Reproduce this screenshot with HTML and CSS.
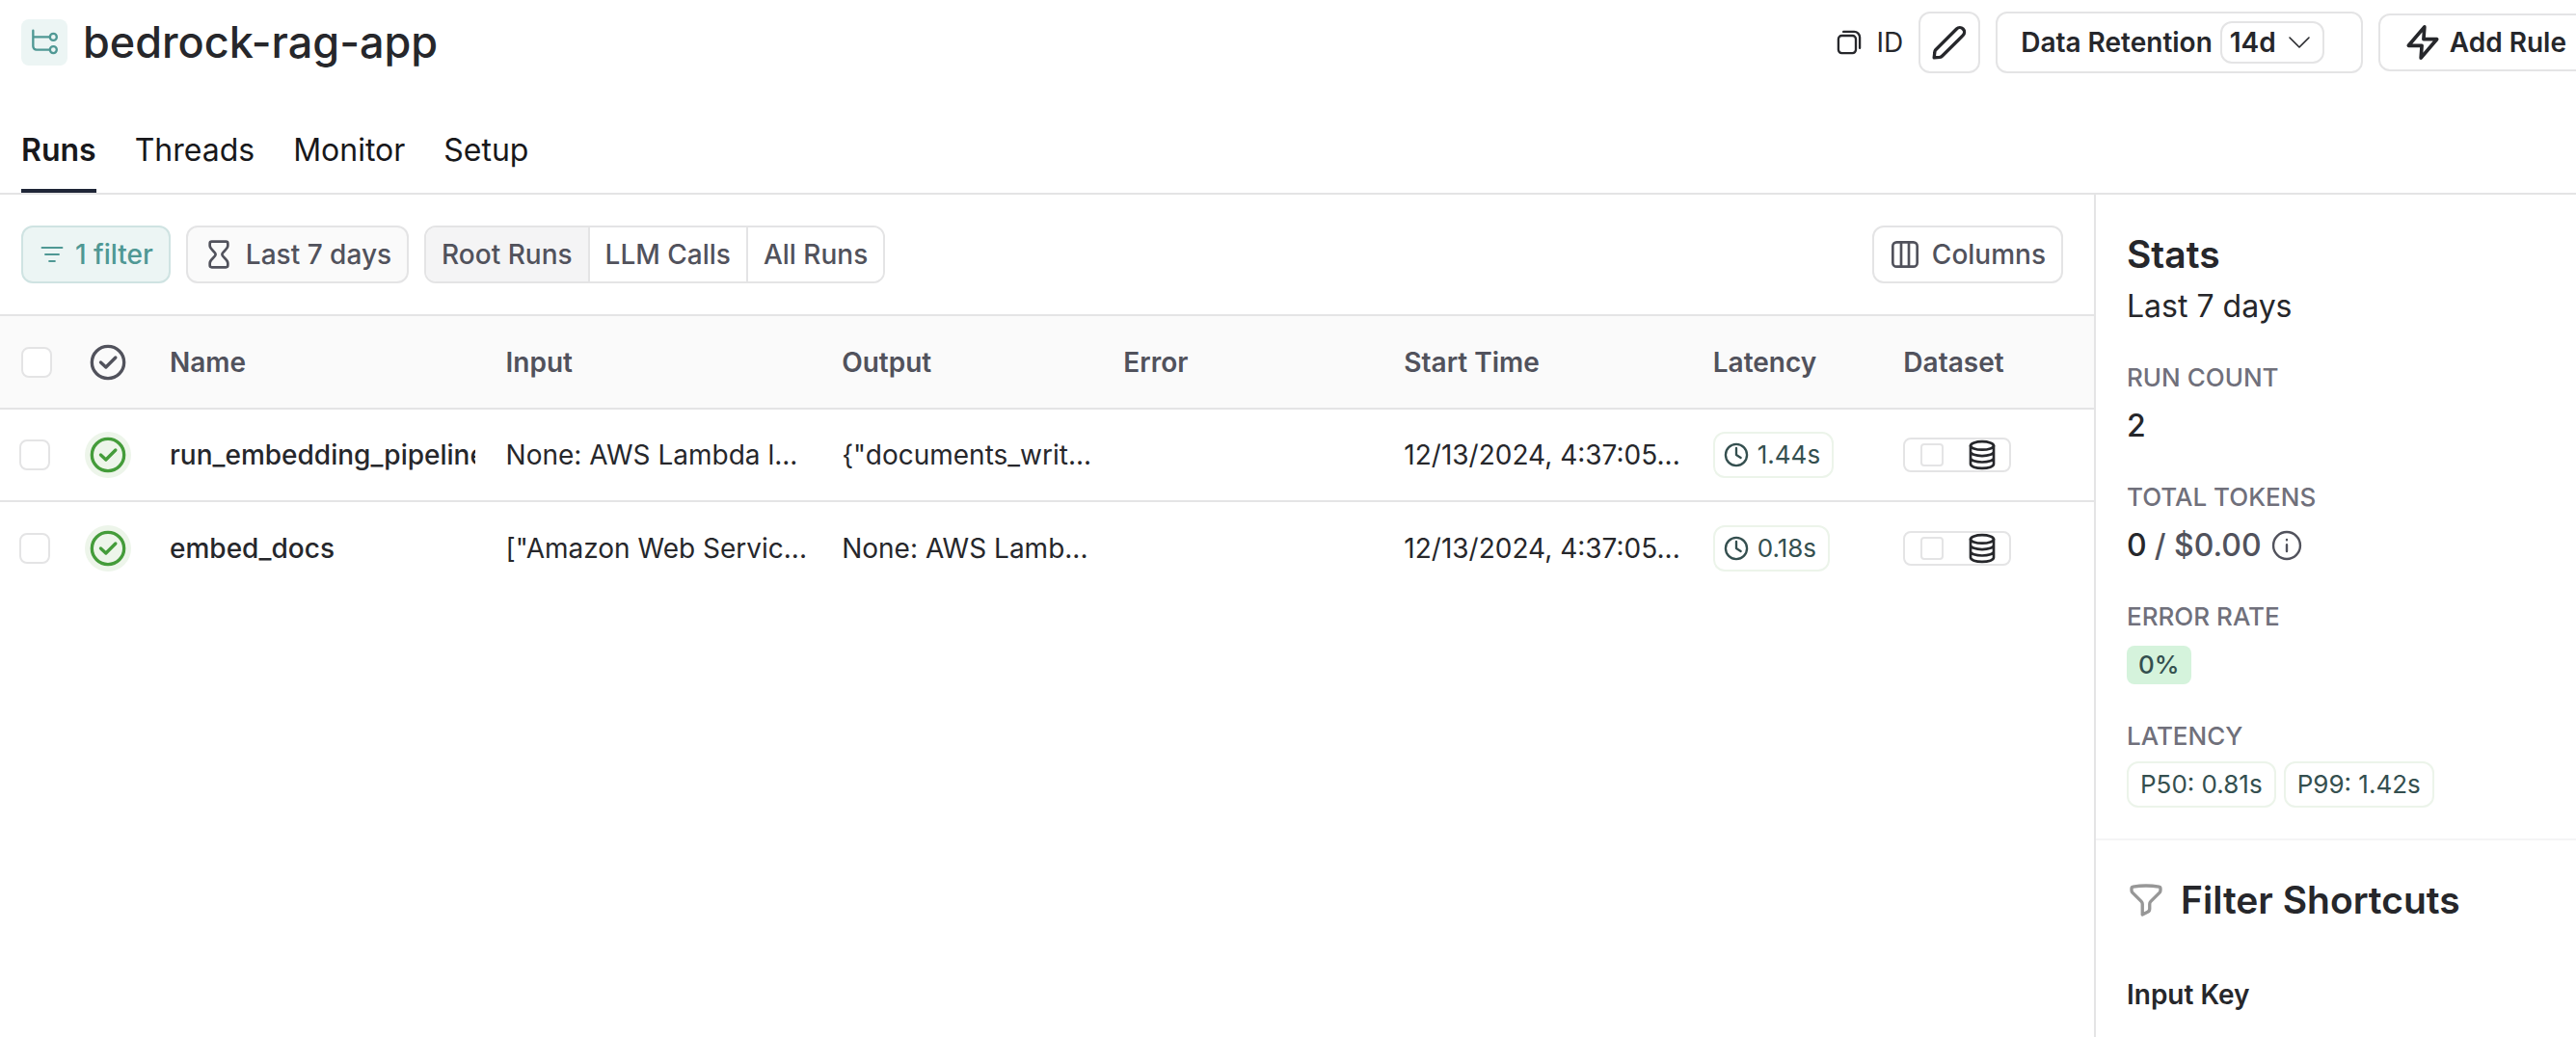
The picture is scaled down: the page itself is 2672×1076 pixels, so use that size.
FILE: index.html
```html
<!DOCTYPE html>
<html lang="en">
<head>
<meta charset="utf-8">
<title>bedrock-rag-app</title>
<link rel="stylesheet" href="styles.css">
</head>
<body>
<svg class="sprite" aria-hidden="true">
  <symbol id="check-circle" viewBox="0 0 24 24"><circle cx="12" cy="12" r="10"/><path d="M7.500 12l3.200 3 6-6"/></symbol>
  <symbol id="clock" viewBox="0 0 24 24"><circle cx="12" cy="12" r="9.500"/><path d="M12 6v6l4 2.500"/></symbol>
  <symbol id="database" viewBox="0 0 24 24"><ellipse cx="12" cy="4.800" rx="9" ry="3.200"/><path d="M3 4.800v14.400c0 1.800 4 3.200 9 3.200s9-1.400 9-3.200V4.800M3 9.600c0 1.800 4 3.200 9 3.200s9-1.400 9-3.200M3 14.400c0 1.800 4 3.200 9 3.200s9-1.400 9-3.200"/></symbol>
</svg>

<header class="topbar">
  <span class="project-icon"><svg class="icon icon-28" viewBox="0 0 24 24"><path d="M2 1.500v14a3 3 0 0 0 3 3h12M2 7.200h15"/><circle cx="20" cy="7.200" r="3"/><circle cx="20" cy="18.500" r="3"/></svg></span>
  <h1 class="title">bedrock-rag-app</h1>
  <div class="actions">
    <button class="copy-id"><svg class="icon icon-28" viewBox="0 0 24 24"><path d="M7 2.500h9.500a5 5 0 0 1 5 5V17"/><rect x="2.500" y="6" width="15.500" height="15.500" rx="3"/></svg>ID</button>
    <button class="btn btn-edit" aria-label="Edit"><svg class="icon icon-40" viewBox="0 0 24 24"><path d="M2.900 18.100c0-.500.100-.700.200-.900.100-.200.200-.400.500-.700L16.500 3.600a2.800 2.800 0 0 1 4 4L7.600 20.400c-.300.300-.500.500-.700.600-.200.100-.400.100-.900.200l-3.500.300z"/></svg></button>
    <button class="btn btn-retention">Data Retention <span class="pill">14d <svg class="icon icon-24 thin" viewBox="0 0 24 24"><path d="M2 7l10 10L22 7"/></svg></span></button>
    <button class="btn btn-rule"><svg class="icon icon-44" viewBox="0 0 24 24"><path d="M13 3.200L4 13.800h7.500L11 20.800L20 10.200h-7.500z"/></svg>Add Rule</button>
  </div>
</header>

<nav class="tabs">
  <a class="tab active" href="#runs">Runs</a>
  <a class="tab" href="#threads">Threads</a>
  <a class="tab" href="#monitor">Monitor</a>
  <a class="tab" href="#setup">Setup</a>
</nav>

<div class="body">
  <main class="main">
    <div class="toolbar">
      <button class="chip chip-filter"><svg class="icon icon-28 thin" viewBox="0 0 24 24"><path d="M3 6h18M6 12h12M9.500 18h5"/></svg>1 filter</button>
      <button class="chip chip-time"><svg class="icon icon-32" viewBox="0 0 24 24"><path d="M6.500 2h11c.800 0 1.500.600 1.500 1.500v1.800c0 2.700-4.500 4.700-4.500 6.700s4.500 4 4.500 6.700v1.800c0 .900-.700 1.500-1.500 1.500h-11c-.800 0-1.500-.600-1.500-1.500v-1.800C5 16 9.500 14 9.500 12S5 8 5 5.300V3.500C5 2.600 5.700 2 6.500 2z"/></svg>Last 7 days</button>
      <div class="segmented">
        <button class="segment selected">Root Runs</button>
        <button class="segment">LLM Calls</button>
        <button class="segment">All Runs</button>
      </div>
      <button class="chip chip-columns"><svg class="icon icon-32" viewBox="0 0 24 24"><rect x="2.500" y="2.500" width="19" height="19" rx="3"/><path d="M9 2.500v19M15 2.500v19"/></svg>Columns</button>
    </div>

    <table class="runs">
      <colgroup><col class="c-check"><col class="c-status"><col class="c-name"><col class="c-input"><col class="c-output"><col class="c-error"><col class="c-start"><col class="c-latency"><col class="c-dataset"></colgroup>
      <thead>
        <tr>
          <th><input class="box" type="checkbox" aria-label="Select all runs"></th>
          <th><svg class="icon icon-40 status-head" role="img" aria-label="Status"><use href="#check-circle"/></svg></th>
          <th>Name</th><th>Input</th><th>Output</th><th>Error</th><th>Start Time</th><th>Latency</th><th>Dataset</th>
        </tr>
      </thead>
      <tbody>
        <tr>
          <td><input class="box" type="checkbox" aria-label="Select run_embedding_pipeline"></td>
          <td><span class="status"><svg class="icon icon-40"><use href="#check-circle"/></svg></span></td>
          <td><div class="name">run_embedding_pipeline</div></td>
          <td>None: AWS Lambda l...</td>
          <td>{"documents_writ...</td>
          <td></td>
          <td>12/13/2024, 4:37:05...</td>
          <td><span class="tag"><svg class="icon icon-28"><use href="#clock"/></svg>1.44s</span></td>
          <td><span class="dataset"><input class="box box-small" type="checkbox" aria-label="In dataset"><svg class="icon icon-32"><use href="#database"/></svg></span></td>
        </tr>
        <tr>
          <td><input class="box" type="checkbox" aria-label="Select embed_docs"></td>
          <td><span class="status"><svg class="icon icon-40"><use href="#check-circle"/></svg></span></td>
          <td><div class="name">embed_docs</div></td>
          <td>["Amazon Web Servic...</td>
          <td>None: AWS Lamb...</td>
          <td></td>
          <td>12/13/2024, 4:37:05...</td>
          <td><span class="tag"><svg class="icon icon-28"><use href="#clock"/></svg>0.18s</span></td>
          <td><span class="dataset"><input class="box box-small" type="checkbox" aria-label="In dataset"><svg class="icon icon-32"><use href="#database"/></svg></span></td>
        </tr>
      </tbody>
    </table>
  </main>

  <aside class="side">
    <section class="stats">
      <h2 class="side-title">Stats</h2>
      <p class="period">Last 7 days</p>
      <dl class="stat-list">
        <div class="stat"><dt>RUN COUNT</dt><dd>2</dd></div>
        <div class="stat"><dt>TOTAL TOKENS</dt><dd>0 <span class="cost">/ $0.00</span><svg class="icon icon-36 thin info" viewBox="0 0 24 24"><circle cx="12" cy="12" r="9.300"/><path d="M12 11.500V16M12 8v.2"/></svg></dd></div>
        <div class="stat"><dt>ERROR RATE</dt><dd><span class="rate">0%</span></dd></div>
        <div class="stat"><dt>LATENCY</dt><dd class="tags"><span class="tag tag-text">P50: 0.81s</span><span class="tag tag-text">P99: 1.42s</span></dd></div>
      </dl>
    </section>
    <section class="shortcuts">
      <h2 class="side-title"><svg class="icon icon-40 funnel" viewBox="0 0 24 24"><path d="M12 3c2.755 0 5.455.232 8.083.678.533.090.917.556.917 1.096v1.044a2.250 2.250 0 0 1-.659 1.591l-5.432 5.432a2.250 2.250 0 0 0-.659 1.591v2.927a2.250 2.250 0 0 1-1.244 2.013L9.750 21v-6.568a2.250 2.250 0 0 0-.659-1.591L3.659 7.409A2.250 2.250 0 0 1 3 5.818V4.774c0-.540.384-1.006.917-1.096A48.320 48.320 0 0 1 12 3z"/></svg>Filter Shortcuts</h2>
      <h3 class="key">Input Key</h3>
    </section>
  </aside>
</div>
</body>
</html>
```
FILE: styles.css
```css
* { box-sizing: border-box; }

body {
  margin: 0;
  display: flex;
  flex-direction: column;
  min-height: 100vh;
  overflow-x: hidden;
  background: #fff;
  color: #26272b;
  font: 400 28px/40px Inter, "Liberation Sans", sans-serif;
}

h1, h2, h3, p, dl, dd { margin: 0; }
button { font: inherit; color: inherit; background: #fff; border: 0; padding: 0; cursor: pointer; white-space: nowrap; }

.sprite { display: none; }
.icon { flex: none; fill: none; stroke: currentColor; stroke-width: 2; stroke-linecap: round; stroke-linejoin: round; }
.icon-24 { width: 24px; height: 24px; }
.icon-28 { width: 28px; height: 28px; }
.icon-32 { width: 32px; height: 32px; }
.icon-36 { width: 36px; height: 36px; }
.icon-40 { width: 40px; height: 40px; }
.icon-44 { width: 44px; height: 44px; }
.thin { stroke-width: 1.6; }

.topbar { display: flex; align-items: center; height: 88px; padding-left: 22px; overflow: hidden; }
.project-icon { display: grid; place-items: center; width: 48px; height: 48px; border-radius: 8px; background: #ecf5f4; color: #4f9894; }
.title { margin-left: 16px; font-size: 45px; line-height: 56px; font-weight: 500; white-space: nowrap; }
.actions { display: flex; align-items: center; flex: none; gap: 16px; margin-left: auto; margin-right: -22px; font-weight: 500; }
.copy-id { display: flex; align-items: center; gap: 14px; font-weight: 400; }
.btn { display: flex; align-items: center; height: 64px; border: 2px solid #e4e4e5; border-radius: 12px; font-weight: 600; }
.btn-edit { width: 64px; justify-content: center; }
.btn-retention { gap: 8px; padding: 0 38px 0 24px; }
.pill { display: flex; align-items: center; gap: 12px; height: 44px; padding: 0 12px 0 8px; border: 2px solid #e4e4e5; border-radius: 12px; }
.btn-rule { gap: 6px; height: 60px; padding: 0 30px 0 22px; }

.tabs { display: flex; gap: 40px; padding: 36px 22px 0; border-bottom: 2px solid #e4e4e5; }
.tab { height: 76px; padding-top: 12px; font-size: 32px; color: #18181b; text-decoration: none; }
.tab.active { font-weight: 600; border-bottom: 4px solid #1f2637; }

.body { display: flex; flex: 1; }
.main { flex: 1; min-width: 0; }

.toolbar { display: flex; gap: 16px; padding: 32px 32px 32px 22px; color: #51525c; font-weight: 500; }
.chip { display: flex; align-items: center; gap: 12px; height: 60px; padding: 0 16px; border: 2px solid #e4e4e5; border-radius: 12px; }
.chip-filter { gap: 10px; background: #ecf5f4; border-color: #cfe3e2; color: #4f9894; }
.chip-time { background: #fafafa; }
.chip-columns { margin-left: auto; }
.segmented { display: flex; border: 2px solid #e4e4e5; border-radius: 12px; overflow: hidden; }
.segment { padding: 0 16px; }
.segment + .segment { border-left: 2px solid #e4e4e5; }
.segment.selected { background: #f4f4f5; }

.runs { width: 100%; table-layout: fixed; border-collapse: collapse; }
.runs th, .runs td { height: 97px; padding: 0 16px 0 0; text-align: left; vertical-align: middle; white-space: nowrap; overflow: hidden; }
.runs td { height: 96px; }
.runs th { color: #51525c; font-weight: 600; background: #fafafa; border-top: 2px solid #e4e4e5; border-bottom: 2px solid #e4e4e5; }
.runs tbody tr + tr { border-top: 2px solid #e4e4e5; }
.runs th:first-child { padding: 0 0 0 22px; }
.runs td:first-child { padding: 0 0 0 20px; }
.runs svg, .runs input { display: block; }
.name { margin-right: 16px; overflow: hidden; font-weight: 500; }
.c-check, .c-status { width: 88px; }
.c-name, .c-input { width: 16.05%; }
.c-output { width: 13.45%; }
.c-error { width: 13.4%; }
.c-start { width: 14.75%; }
.c-latency { width: 9.1%; }

.box { appearance: none; width: 32px; height: 32px; margin: 0; background: #fff; border: 2px solid #e4e4e5; border-radius: 8px; }
.box-small { width: 24px; height: 24px; border-radius: 4px; }
.status-head { margin-left: 4px; }
.status { display: grid; place-items: center; width: 48px; height: 48px; border-radius: 50%; background: #edf5ea; color: #449c3a; }

.tag { display: inline-flex; align-items: center; gap: 8px; height: 48px; padding: 0 12px 0 8px; border: 2px solid #ecf4ea; border-radius: 12px; color: #344f4f; font-size: 26px; vertical-align: middle; }
.tag-text { padding: 0 12px; }
.dataset { display: flex; align-items: center; justify-content: space-between; width: 112px; height: 36px; padding: 0 12px 0 16px; border: 2px solid #e4e4e5; border-radius: 8px; }

.side { width: 500px; border-left: 2px solid #e4e4e5; }
.stats { padding: 38px 32px 30px; border-bottom: 2px solid #f4f4f5; }
.side-title { display: flex; align-items: center; gap: 16px; font-size: 39px; line-height: 48px; font-weight: 600; }
.period { font-size: 32px; margin-top: 10px; }
.stat-list { display: grid; gap: 30px; margin-top: 36px; }
.stat { display: grid; gap: 6px; }
.stat dt { color: #70707b; font-size: 26px; line-height: 36px; font-weight: 500; }
.stat dd { display: flex; align-items: center; height: 52px; font-size: 32px; font-weight: 500; }
.cost { margin: 0 8px; color: #51525c; }
.info { color: #51525c; }
.rate { padding: 0 12px; border-radius: 8px; background: #d5f3dc; color: #344f4f; font-size: 26px; }
.stat .tags { gap: 8px; font-weight: 400; }
.shortcuts { padding: 38px 32px; }
.funnel { color: #979797; }
.key { margin-top: 54px; font-size: 28px; line-height: 40px; font-weight: 600; }
```
